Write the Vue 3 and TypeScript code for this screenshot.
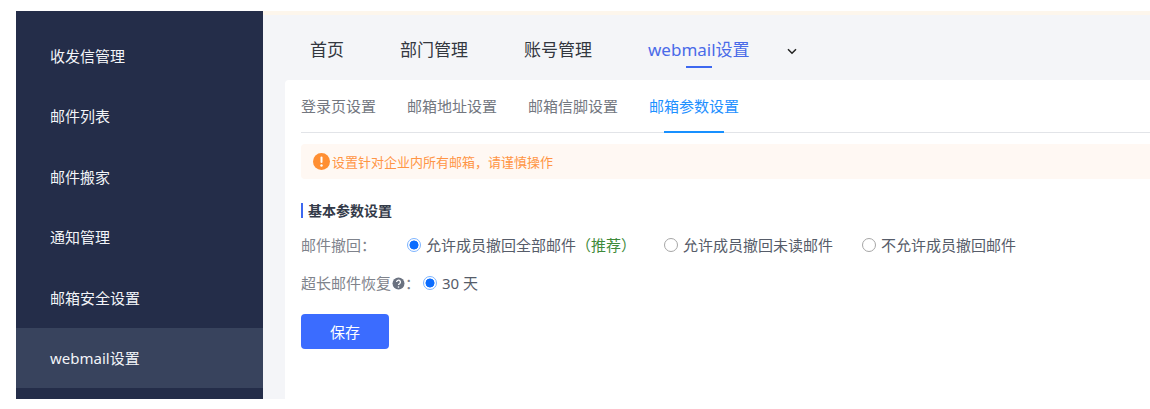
<script setup lang="ts">
const menu: string[] = ['收发信管理', '邮件列表', '邮件搬家', '通知管理', '邮箱安全设置', 'webmail设置']
const tabs: string[] = ['首页', '部门管理', '账号管理', 'webmail设置']
const subTabs: string[] = ['登录页设置', '邮箱地址设置', '邮箱信脚设置', '邮箱参数设置']
</script>

<template>
  <div class="page">
    <aside class="side">
      <div v-for="(m, i) in menu" :key="m" class="side-item" :class="{ on: i === 5 }">{{ m }}</div>
    </aside>
    <main class="main">
      <div class="strip"></div>
      <nav class="tabs">
        <span v-for="(t, i) in tabs" :key="t" class="tab" :class="{ on: i === 3 }">{{ t }}</span>
        <svg class="chev" width="10" height="7" viewBox="0 0 10 7"><path d="M1 1.2 5 5.2 9 1.2" fill="none" stroke="#222" stroke-width="1.5"/></svg>
      </nav>
      <section class="card">
        <div class="subtabs">
          <span v-for="(t, i) in subTabs" :key="t" class="subtab" :class="{ on: i === 3 }">{{ t }}</span>
        </div>
        <div class="alert">
          <svg width="17" height="17" viewBox="0 0 17 17"><circle cx="8.5" cy="8.5" r="8.5" fill="#ff8f33"/><rect x="7.5" y="3.5" width="2" height="6.5" rx="1" fill="#fff"/><circle cx="8.5" cy="12.5" r="1.2" fill="#fff"/></svg>
          <span>设置针对企业内所有邮箱，请谨慎操作</span>
        </div>
        <h3 class="title">基本参数设置</h3>
        <div class="row recall">
          <span class="label">邮件撤回：</span>
          <label class="radio first"><i class="dot on"></i>允许成员撤回全部邮件<em>（推荐）</em></label>
          <label class="radio second"><i class="dot"></i>允许成员撤回未读邮件</label>
          <label class="radio"><i class="dot"></i>不允许成员撤回邮件</label>
        </div>
        <div class="row long">
          <span class="label">超长邮件恢复</span>
          <svg class="help" width="13" height="13" viewBox="0 0 13 13"><circle cx="6.5" cy="6.5" r="6" fill="#6b7280"/><path d="M4.6 5.1a1.9 1.9 0 1 1 2.9 1.6c-.7.4-1 .7-1 1.4" fill="none" stroke="#fff" stroke-width="1.3"/><circle cx="6.5" cy="10" r=".8" fill="#fff"/></svg>
          <span class="label colon">：</span>
          <label class="radio"><i class="dot on"></i>30 天</label>
        </div>
        <button class="save" type="button">保存</button>
      </section>
    </main>
  </div>
</template>

<style>
html, body { margin: 0; background: #fff; }
</style>

<style scoped>
.page {
  width: 1150px;
  height: 409px;
  box-sizing: border-box;
  padding: 11px 0 10px 16px;
  display: flex;
  overflow: hidden;
  font-family: "Noto Sans", "Noto Sans CJK SC", sans-serif;
}
.side {
  width: 247px;
  flex: none;
  background: #242d49;
  padding-top: 15px;
  box-sizing: border-box;
}
.side-item {
  height: 60.4px;
  line-height: 60px;
  padding-left: 34px;
  color: #f2f4f8;
  font-size: 15px;
}
.side-item.on { background: #38435d; }
.main {
  flex: 1;
  min-width: 0;
  background: #f4f5f8;
  display: flex;
  flex-direction: column;
}
.strip { height: 4px; background: #fdf6ec; flex: none; }
.tabs {
  height: 65px;
  flex: none;
  display: flex;
  align-items: flex-start;
  padding-left: 47px;
  position: relative;
}
.tab {
  font-size: 17px;
  line-height: 24px;
  margin-top: 23px;
  margin-right: 56px;
  color: #33373f;
  position: relative;
}
.tab:first-child { margin-right: 56px; }
.tab.on { color: #4a6ae8; margin-right: 37px; }
.tab.on::after {
  content: "";
  position: absolute;
  left: 38px;
  width: 26px;
  bottom: -6px;
  height: 2px;
  background: #3d68f0;
}
.chev { margin-top: 33px; }
.card {
  flex: 1;
  margin-left: 22px;
  background: #fff;
  border-radius: 4px 0 0 0;
  padding-left: 16px;
  min-height: 0;
}
.subtabs {
  height: 53px;
  box-sizing: border-box;
  border-bottom: 1px solid #e2e4e8;
  display: flex;
  gap: 31px;
}
.subtab {
  font-size: 15px;
  line-height: 53px;
  height: 53px;
  color: #73777f;
  position: relative;
  white-space: nowrap;
}
.subtab.on { color: #1e90ff; }
.subtab.on::after {
  content: "";
  position: absolute;
  left: 15px;
  right: 15px;
  bottom: 0;
  height: 2px;
  background: #1890ff;
}
.alert {
  margin-top: 11px;
  height: 35px;
  background: #fff8f3;
  border-radius: 4px 0 0 4px;
  display: flex;
  align-items: center;
  gap: 2px;
  padding-left: 12px;
  font-size: 13px;
  color: #ff9545;
}
.title {
  margin: 24px 0 0;
  font-size: 14px;
  line-height: 18px;
  font-weight: 700;
  color: #333a48;
  border-left: 2px solid #3d68f0;
  padding-left: 5px;
  height: 15px;
  display: flex;
  align-items: center;
}
.row {
  display: flex;
  align-items: center;
  font-size: 15px;
  line-height: 20px;
  color: #565c69;
}
.recall { margin-top: 17px; }
.long { margin-top: 18px; }
.label { color: #7f838c; white-space: nowrap; }
.recall .label { width: 106px; }
.colon { width: 18px; margin-left: 0; }
.help { margin-left: 1px; }
.radio { display: inline-flex; align-items: center; white-space: nowrap; }
.first { width: 257px; }
.second { width: 198px; }
em { font-style: normal; color: #3f8a3a; }
.dot {
  width: 14px;
  height: 14px;
  box-sizing: border-box;
  border-radius: 50%;
  border: 1.5px solid #a6a6a6;
  background: #fff;
  margin-right: 5px;
  flex: none;
}
.dot.on {
  border: 1.5px solid #7db4ff;
  background: radial-gradient(circle, #0a6cff 0 4.2px, #fff 4.8px);
}
.save {
  display: block;
  margin-top: 21px;
  width: 88px;
  height: 35px;
  border: 0;
  border-radius: 4px;
  background: #3b6cff;
  color: #fff;
  font: inherit;
  font-size: 15px;
}
</style>
